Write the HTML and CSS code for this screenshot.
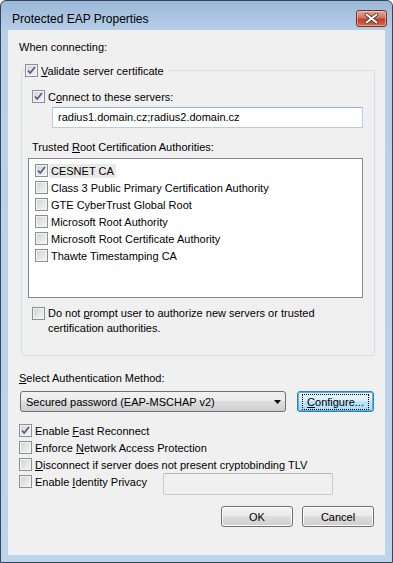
FILE: index.html
```html
<!DOCTYPE html>
<html lang="en">
<head>
    <meta charset="UTF-8">
    <title>Protected EAP Properties</title>
    <link rel="stylesheet" href="styles.css">
</head>
<body>
    <div class="window">
        <!-- title bar -->
        <div class="titlebar">
            <span class="title">Protected EAP Properties</span>
            <span class="close">
                <svg width="15" height="11" viewBox="0 0 15 11">
                    <path d="M2.5 1.5 L12.5 9.5 M12.5 1.5 L2.5 9.5" stroke="#4a3535" stroke-width="3.6" stroke-linecap="round"/>
                    <path d="M2.5 1.5 L12.5 9.5 M12.5 1.5 L2.5 9.5" stroke="#fff" stroke-width="2" stroke-linecap="round"/>
                </svg>
            </span>
        </div>

        <div class="client">
            <div class="caption first">When connecting:</div>

            <fieldset class="group">
                <legend>
                    <span class="cb checked"><svg width="11" height="11" viewBox="0 0 11 11"><path d="M2 5.5 L4.2 8 L9 2" fill="none" stroke="#4a5c8f" stroke-width="1.7"/></svg></span>
                    <span><u>V</u>alidate server certificate</span>
                </legend>

                <div class="inner">
                    <div class="check-row connect">
                        <span class="cb checked"><svg width="11" height="11" viewBox="0 0 11 11"><path d="M2 5.5 L4.2 8 L9 2" fill="none" stroke="#4a5c8f" stroke-width="1.7"/></svg></span>
                        <span>C<u>o</u>nnect to these servers:</span>
                    </div>
                    <div class="textbox servers">radius1.domain.cz;radius2.domain.cz</div>

                    <div class="caption trusted">Trusted <u>R</u>oot Certification Authorities:</div>
                    <div class="listbox">
                        <div class="item">
                            <span class="cb checked"><svg width="11" height="11" viewBox="0 0 11 11"><path d="M2 5.5 L4.2 8 L9 2" fill="none" stroke="#4a5c8f" stroke-width="1.7"/></svg></span>
                            <span class="sel">CESNET CA</span>
                        </div>
                        <div class="item"><span class="cb"></span><span>Class 3 Public Primary Certification Authority</span></div>
                        <div class="item"><span class="cb"></span><span>GTE CyberTrust Global Root</span></div>
                        <div class="item"><span class="cb"></span><span>Microsoft Root Authority</span></div>
                        <div class="item"><span class="cb"></span><span>Microsoft Root Certificate Authority</span></div>
                        <div class="item"><span class="cb"></span><span>Thawte Timestamping CA</span></div>
                    </div>

                    <div class="check-row multi">
                        <span class="cb"></span>
                        <span class="multi-text">Do not <u>p</u>rompt user to authorize new servers or trusted<br>certification authorities.</span>
                    </div>
                </div>
            </fieldset>

            <div class="caption method"><u>S</u>elect Authentication Method:</div>
            <div class="method-row">
                <div class="combo">
                    <span>Secured password (EAP-MSCHAP v2)</span>
                    <svg width="7" height="4" viewBox="0 0 7 4"><path d="M0 0 H7 L3.5 4 Z" fill="#000"/></svg>
                </div>
                <div class="btn default"><span class="focus"><u>C</u>onfigure...</span></div>
            </div>

            <div class="options">
                <div class="check-row">
                    <span class="cb checked"><svg width="11" height="11" viewBox="0 0 11 11"><path d="M2 5.5 L4.2 8 L9 2" fill="none" stroke="#4a5c8f" stroke-width="1.7"/></svg></span>
                    <span>Enable <u>F</u>ast Reconnect</span>
                </div>
                <div class="check-row"><span class="cb"></span><span>Enforce <u>N</u>etwork Access Protection</span></div>
                <div class="check-row"><span class="cb"></span><span><u>D</u>isconnect if server does not present cryptobinding TLV</span></div>
                <div class="identity-row">
                    <div class="check-row"><span class="cb"></span><span>Enable <u>I</u>dentity Privacy</span></div>
                    <div class="textbox disabled"></div>
                </div>
            </div>

            <div class="buttons">
                <div class="btn">OK</div>
                <div class="btn">Cancel</div>
            </div>
        </div>
    </div>
</body>
</html>
```

FILE: styles.css
```css
body {
    margin: 0;
    font-family: "Liberation Sans", Arial, sans-serif;
    font-size: 11px;
    color: #000;
    background: #fff;
}

.window {
    width: 393px;
    height: 563px;
    box-sizing: border-box;
    border: 1px solid #34475d;
    border-radius: 6px 6px 0 0;
    background: linear-gradient(#9cb8d8, #b7cfe9 30px, #bcd4ec);
    padding: 0 7px 7px 7px;
    display: flex;
    flex-direction: column;
}

.titlebar {
    height: 29px;
    display: flex;
    justify-content: space-between;
    flex: none;
}

.title {
    padding: 11px 0 0 4px;
    font-size: 12px;
}

.close {
    margin: 9px -2px 0 0;
    width: 31px;
    height: 17px;
    box-sizing: border-box;
    border: 1px solid #7a2f22;
    border-radius: 3px;
    background: linear-gradient(#e6a898, #d0735f 45%, #c13e25 55%, #d76a4e);
    box-shadow: inset 0 0 0 1px rgba(255, 220, 210, 0.5);
    display: flex;
    align-items: center;
    justify-content: center;
}

.client {
    flex: 1;
    background: #f0f0f0;
    padding: 0 11px;
}

.caption {
    line-height: 15px;
}

.caption.first {
    padding-top: 10px;
}

.group {
    margin: 8px -1px 0 2px;
    padding: 0 0 0 3px;
    border: 1px solid #d5dfe5;
    border-radius: 3px;
    height: 293px;
    box-sizing: border-box;
}

.group legend {
    padding: 0 4px 0 0;
    margin-left: 0;
    display: flex;
    align-items: center;
    gap: 3px;
    height: 15px;
}

.inner {
    padding-left: 7px;
}

.cb {
    width: 13px;
    height: 13px;
    box-sizing: border-box;
    border: 1px solid #8e8f8f;
    background: linear-gradient(135deg, #cfd1d4, #f7f7f7);
    box-shadow: inset 0 0 0 1px #f3f3f3;
    flex: none;
    display: inline-flex;
    align-items: center;
    justify-content: center;
}

.check-row {
    display: flex;
    align-items: center;
    gap: 3px;
    height: 17px;
}

.connect {
    margin-top: 10px;
}

.textbox {
    height: 21px;
    box-sizing: border-box;
    border: 1px solid #b5cde8;
    border-top-color: #8fb2da;
    background: #fff;
    line-height: 19px;
    padding-left: 5px;
}

.servers {
    margin: 2px 0 0 20px;
    width: 311px;
}

.trusted {
    margin-top: 12px;
}

.listbox {
    margin: 3px 0 0 -4px;
    width: 335px;
    height: 140px;
    box-sizing: border-box;
    border: 1px solid #828790;
    background: #fff;
    padding: 3px 0 0 6px;
}

.item {
    display: flex;
    align-items: center;
    gap: 3px;
    height: 17px;
}

.sel {
    background: #e9e9e9;
    padding: 1px 2px;
    margin-left: -2px;
}

.multi {
    margin-top: 9px;
    align-items: flex-start;
    height: auto;
}

.multi-text {
    line-height: 15px;
    margin-top: -1px;
}

.method {
    margin-top: 15px;
}

.method-row {
    display: flex;
    align-items: center;
    margin-top: 5px;
    gap: 11px;
}

.combo {
    margin-left: 1px;
    width: 266px;
    height: 21px;
    box-sizing: border-box;
    border: 1px solid #707070;
    border-radius: 3px;
    background: linear-gradient(#f2f2f2, #ebebeb 50%, #dddddd 50%, #cfcfcf);
    display: flex;
    align-items: center;
    justify-content: space-between;
    padding: 0 4px 0 5px;
}

.btn {
    width: 72px;
    height: 21px;
    box-sizing: border-box;
    border: 1px solid #707070;
    border-radius: 3px;
    background: linear-gradient(#f2f2f2, #ebebeb 50%, #dddddd 50%, #cfcfcf);
    box-shadow: inset 0 0 0 1px #fbfbfb;
    display: flex;
    align-items: center;
    justify-content: center;
}

.btn.default {
    width: 77px;
    border-color: #3c7fb1;
    background: linear-gradient(#eaf6fd, #d9f0fc 50%, #bee6fd 50%, #a7d9f5);
    box-shadow: inset 0 0 0 1px #48b6f0;
}

.focus {
    outline: 1px dotted #000;
    outline-offset: 1px;
    padding: 0 3px;
}

.options {
    margin-top: 10px;
}

.identity-row {
    display: flex;
    align-items: flex-start;
    gap: 16px;
}

.textbox.disabled {
    width: 170px;
    height: 22px;
    border: 1px solid #c9c9c9;
    border-top-color: #b5b5b5;
    background: #f0f0f0;
    border-radius: 2px;
}

.buttons {
    display: flex;
    justify-content: flex-end;
    gap: 9px;
    margin: 11px 0 0 0;
}
```
